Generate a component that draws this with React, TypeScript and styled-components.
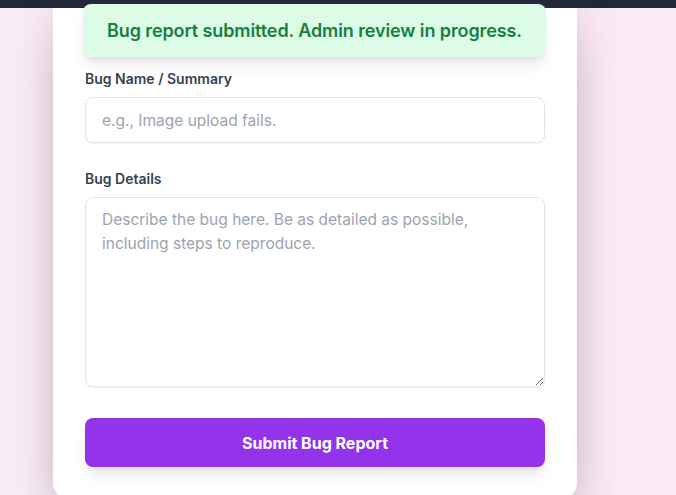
import styled, { createGlobalStyle } from "styled-components";

const GlobalStyle = createGlobalStyle`
  html, body {
    margin: 0;
    padding: 0;
  }
  body {
    font-family: Inter, "Noto Sans", Arial, sans-serif;
    background: linear-gradient(90deg, #f9ecf6 0%, #f6e8f3 50%, #fbe9f4 100%);
    min-height: 495px;
    overflow: hidden;
  }
  * {
    box-sizing: border-box;
  }
`;

const TopBar = styled.div`
  height: 8px;
  background: #1f2937;
`;

const Page = styled.main`
  position: relative;
  display: flex;
  padding-left: 53px;
`;

const Card = styled.section`
  width: 524px;
  background: #ffffff;
  border-radius: 0 0 16px 16px;
  padding: 61px 32px 32px;
  box-shadow: 0 0 40px rgba(120, 60, 100, 0.16), 0 25px 50px -12px rgba(0, 0, 0, 0.2);
  display: flex;
  flex-direction: column;
`;

const Toast = styled.div`
  position: absolute;
  top: -4px;
  left: 83px;
  width: 463px;
  height: 53px;
  background: #dcfce7;
  color: #15803d;
  border-radius: 8px;
  box-shadow: 0 10px 15px -3px rgba(0, 0, 0, 0.1), 0 4px 6px -4px rgba(0, 0, 0, 0.1);
  display: flex;
  align-items: center;
  justify-content: center;
  font-size: 18px;
  font-weight: 600;
  letter-spacing: -0.1px;
  z-index: 10;
`;

const Field = styled.div<{ $gap: number }>`
  display: flex;
  flex-direction: column;
  margin-bottom: ${(p) => p.$gap}px;
`;

const Label = styled.label`
  font-size: 14px;
  line-height: 20px;
  font-weight: 600;
  color: #374151;
  margin-bottom: 8px;
`;

const TextInput = styled.input`
  height: 46px;
  width: 100%;
  border: 1px solid #e5e7eb;
  border-radius: 8px;
  padding: 0 16px;
  font-family: inherit;
  font-size: 15.5px;
  color: #111827;
  background: #fff;
  box-shadow: 0 1px 2px rgba(0, 0, 0, 0.06);
  outline: none;
  &::placeholder {
    color: #9ca3af;
  }
`;

const TextArea = styled.textarea`
  display: block;
  height: 190px;
  width: 100%;
  border: 1px solid #e5e7eb;
  border-radius: 8px;
  padding: 10px 16px;
  font-family: inherit;
  font-size: 15.5px;
  line-height: 24px;
  color: #111827;
  background: #fff;
  box-shadow: 0 1px 2px rgba(0, 0, 0, 0.06);
  outline: none;
  resize: vertical;
  &::placeholder {
    color: #9ca3af;
  }
`;

const SubmitButton = styled.button`
  height: 49px;
  width: 100%;
  border: none;
  border-radius: 8px;
  background: #9333ea;
  color: #ffffff;
  font-family: inherit;
  font-size: 16px;
  font-weight: 700;
  cursor: pointer;
  box-shadow: 0 10px 15px -3px rgba(0, 0, 0, 0.1), 0 4px 6px -4px rgba(0, 0, 0, 0.1);
`;

export default function App() {
  return (
    <>
      <GlobalStyle />
      <TopBar />
      <Page>
        <Toast>Bug report submitted. Admin review in progress.</Toast>
        <Card>
          <Field $gap={26}>
            <Label>Bug Name / Summary</Label>
            <TextInput placeholder="e.g., Image upload fails." />
          </Field>
          <Field $gap={31}>
            <Label>Bug Details</Label>
            <TextArea placeholder="Describe the bug here. Be as detailed as possible, including steps to reproduce." />
          </Field>
          <SubmitButton>Submit Bug Report</SubmitButton>
        </Card>
      </Page>
    </>
  );
}
